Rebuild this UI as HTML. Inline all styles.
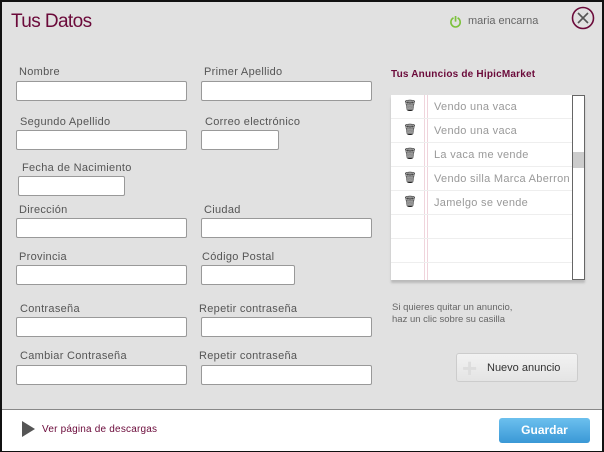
<!DOCTYPE html>
<html><head><meta charset="utf-8"><style>
body{margin:0;width:604px;height:452px;overflow:hidden;font-family:"Liberation Sans",sans-serif}
#w{position:absolute;left:0;top:0;width:600px;height:448px;border:2px solid #111;background:#e1e1e1}
.a{position:absolute}
.l{position:absolute;font-size:11px;color:#555;letter-spacing:.3px}
.i{position:absolute;height:18px;background:#fff;border:1px solid #999;border-radius:2px}
.r{position:absolute;left:0;width:181px;height:23px;border-bottom:1px solid #eee;font-size:11px;color:#999;letter-spacing:.3px}
.r span{position:absolute;left:43px;top:6px}
.r b{position:absolute;left:12px;top:4px;font-size:11px;color:#222;font-weight:normal}
</style></head><body><div id="w">
<div class="a" style="left:9px;top:9px;font-size:19px;color:#6b0a3a;letter-spacing:-.6px">Tus Datos</div>
<div class="a" style="left:448px;top:12px;color:#7bc13a;font-size:14px;font-weight:bold">⏻</div>
<div class="a" style="left:466px;top:13px;font-size:11px;color:#666">maria encarna</div>
<svg class="a" style="left:569px;top:4px" width="24" height="24"><circle cx="12" cy="12" r="10.5" fill="none" stroke="#6b0a3a" stroke-width="1.6"/><path d="M7 7L17 17M17 7L7 17" stroke="#555" stroke-width="1.6"/></svg>

<div class="l" style="left:17px;top:64px">Nombre</div><div class="i" style="left:14px;top:79px;width:169px"></div>
<div class="l" style="left:202px;top:64px">Primer Apellido</div><div class="i" style="left:199px;top:79px;width:169px"></div>
<div class="l" style="left:18px;top:114px">Segundo Apellido</div><div class="i" style="left:14px;top:128px;width:169px"></div>
<div class="l" style="left:203px;top:114px">Correo electrónico</div><div class="i" style="left:199px;top:128px;width:76px"></div>
<div class="l" style="left:20px;top:160px">Fecha de Nacimiento</div><div class="i" style="left:16px;top:174px;width:105px"></div>
<div class="l" style="left:17px;top:202px">Dirección</div><div class="i" style="left:14px;top:216px;width:169px"></div>
<div class="l" style="left:202px;top:202px">Ciudad</div><div class="i" style="left:199px;top:216px;width:169px"></div>
<div class="l" style="left:17px;top:249px">Provincia</div><div class="i" style="left:14px;top:263px;width:169px"></div>
<div class="l" style="left:200px;top:249px">Código Postal</div><div class="i" style="left:199px;top:263px;width:92px"></div>
<div class="l" style="left:18px;top:301px">Contraseña</div><div class="i" style="left:14px;top:315px;width:169px"></div>
<div class="l" style="left:197px;top:301px">Repetir contraseña</div><div class="i" style="left:199px;top:315px;width:169px"></div>
<div class="l" style="left:18px;top:348px">Cambiar Contraseña</div><div class="i" style="left:14px;top:363px;width:169px"></div>
<div class="l" style="left:197px;top:348px">Repetir contraseña</div><div class="i" style="left:199px;top:363px;width:169px"></div>

<div class="a" style="left:389px;top:67px;font-size:10px;color:#6b0a3a;font-weight:bold;letter-spacing:.2px">Tus Anuncios de HipicMarket</div>
<div class="a" style="left:389px;top:93px;width:194px;height:185px;background:#fff;box-shadow:0 3px 2px #bbb;overflow:hidden">
<div class="a" style="left:33px;top:0;width:4px;height:185px;border-left:1px solid #f0d4dc;border-right:1px solid #f0d4dc;box-sizing:border-box"></div>
<div class="r" style="top:0"><b>🗑</b><span>Vendo una vaca</span></div>
<div class="r" style="top:24px"><b>🗑</b><span>Vendo una vaca</span></div>
<div class="r" style="top:48px"><b>🗑</b><span>La vaca me vende</span></div>
<div class="r" style="top:72px"><b>🗑</b><span>Vendo silla Marca Aberron</span></div>
<div class="r" style="top:96px"><b>🗑</b><span>Jamelgo se vende</span></div>
<div class="r" style="top:120px"></div>
<div class="r" style="top:144px"></div>
<div class="a" style="left:181px;top:0;width:11px;height:183px;border:1px solid #666;background:#fff"></div>
<div class="a" style="left:182px;top:57px;width:11px;height:16px;background:#ccc"></div>
</div>
<div class="a" style="left:390px;top:300px;font-size:9.5px;color:#666;line-height:12px">Si quieres quitar un anuncio,<br>haz un clic sobre su casilla</div>
<div class="a" style="left:454px;top:351px;width:120px;height:27px;border:1px solid #ccc;border-radius:3px;background:linear-gradient(#f2f2f2,#e4e4e4)"><span class="a" style="left:5px;top:2px;font-size:26px;color:#ddd;line-height:24px;font-weight:bold">+</span><span class="a" style="left:30px;top:8px;font-size:11px;color:#333">Nuevo anuncio</span></div>

<div class="a" style="left:0;top:407px;width:600px;height:41px;background:#fff;border-top:1px solid #888"></div>
<svg class="a" style="left:20px;top:419px" width="14" height="16"><path d="M0 0L13 8L0 16Z" fill="#555"/></svg>
<div class="a" style="left:40px;top:422px;font-size:10px;color:#6b0a3a;letter-spacing:.2px">Ver página de descargas</div>
<div class="a" style="left:497px;top:416px;width:91px;height:25px;border-radius:3px;background:linear-gradient(#6cc0ee,#3a98d6);color:#fff;font-size:12px;font-weight:bold;text-align:center;line-height:25px">Guardar</div>
</div></body></html>
